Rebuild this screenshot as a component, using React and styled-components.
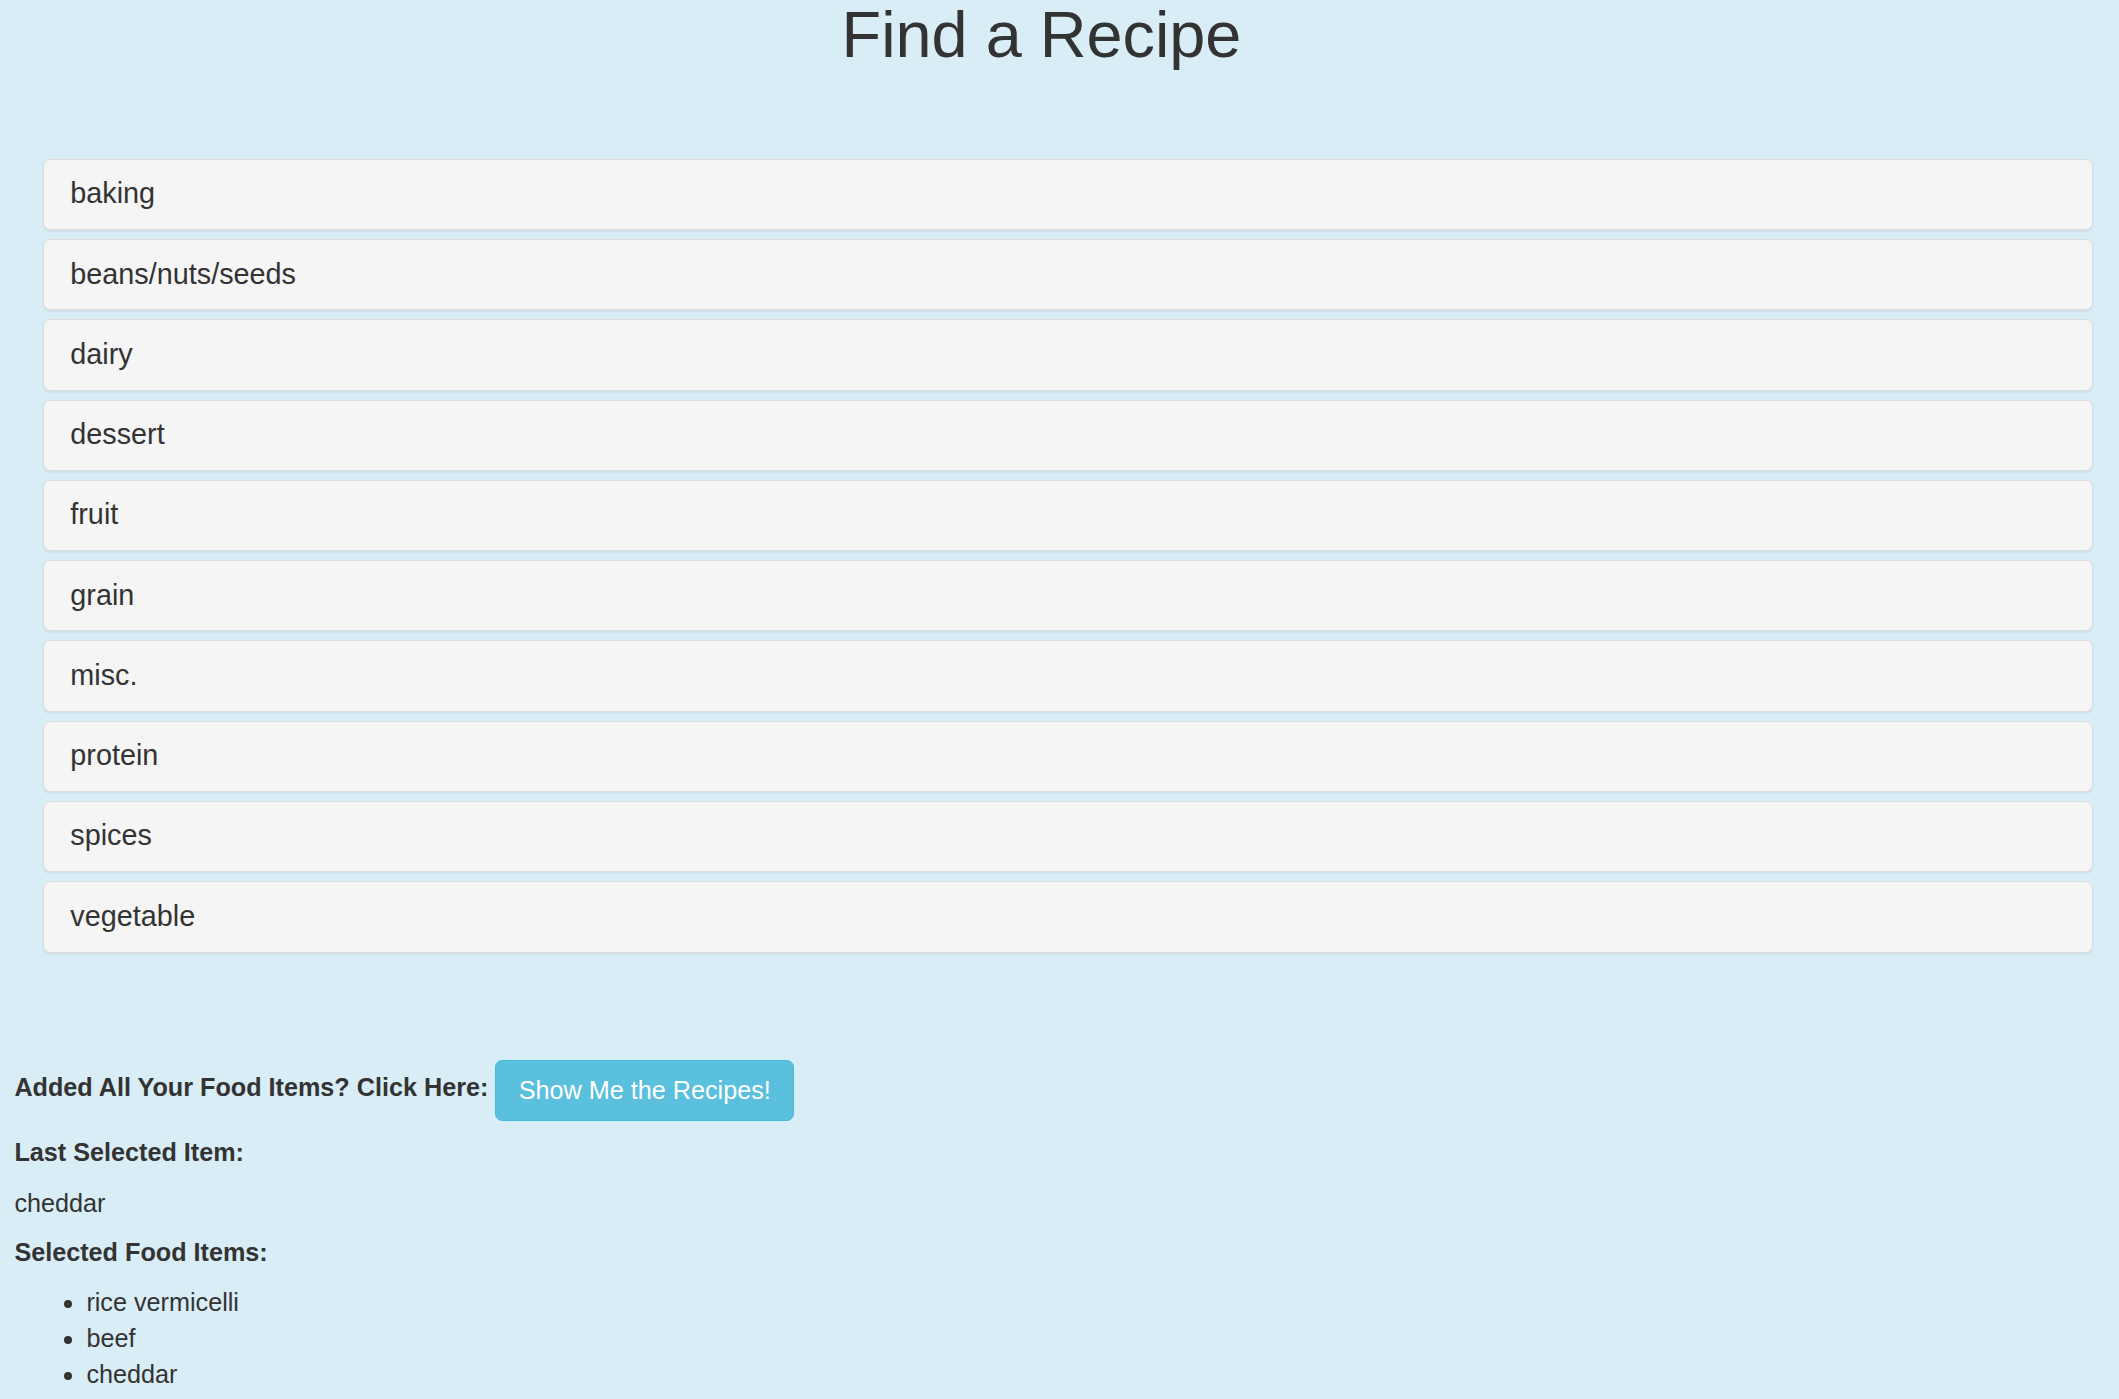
import React from "react";
import styled, { createGlobalStyle } from "styled-components";

const GlobalStyle = createGlobalStyle`
  html, body {
    margin: 0;
    padding: 0;
    background: #d9edf7;
  }
  body {
    font-family: "Liberation Sans", Arial, Helvetica, sans-serif;
    color: #333333;
    font-size: 25.2px;
    line-height: 36px;
  }
  * { box-sizing: border-box; }
`;

const Page = styled.div`
  min-height: 1399px;
  background: #d9edf7;
  padding-bottom: 40px;
`;

const Title = styled.h1`
  margin: -1.4px 0 0;
  padding-right: 36px;
  text-align: center;
  font-size: 64.8px;
  line-height: 1.1;
  font-weight: 400;
  color: #333333;
`;

const PanelGroup = styled.div`
  display: flex;
  flex-direction: column;
  gap: 9px;
  margin: 89px 26.3px 0 42.7px;
`;

const Panel = styled.div`
  background: #f5f5f5;
  border: 1px solid #dddddd;
  border-radius: 7.2px;
  box-shadow: 0 1.8px 1.8px rgba(0, 0, 0, 0.05);
  padding: 18.4px 27px 19.2px 26.6px;
`;

const PanelTitle = styled.h4`
  margin: 0;
  font-size: 28.8px;
  line-height: 31.68px;
  font-weight: 400;
  color: #333333;
`;

const Bottom = styled.div`
  margin-top: 107px;
  padding: 0 14.4px;
  display: flex;
  flex-direction: column;
`;

const ActionRow = styled.div`
  display: flex;
  align-items: flex-start;
  gap: 7px;
`;

const Label = styled.span`
  display: block;
  font-weight: 700;
  font-size: 25.2px;
  line-height: 36px;
  margin-top: ${(p) => p.$top || 0}px;
`;

const Text = styled.p`
  margin: ${(p) => p.$top || 0}px 0 0;
  font-size: 25.2px;
  line-height: 36px;
`;

const Button = styled.button`
  font-family: "Liberation Sans", Arial, Helvetica, sans-serif;
  font-size: 25.2px;
  line-height: 36px;
  color: #ffffff;
  background: #5bc0de;
  border: 1px solid #46b8da;
  border-radius: 7.2px;
  padding: 11.6px 22.4px;
  cursor: pointer;
`;

const List = styled.ul`
  margin: 14px 0 0;
  padding-left: 72px;
  list-style: disc;
`;

const Item = styled.li`
  font-size: 25.2px;
  line-height: 36px;
`;

const categories = [
  "baking",
  "beans/nuts/seeds",
  "dairy",
  "dessert",
  "fruit",
  "grain",
  "misc.",
  "protein",
  "spices",
  "vegetable",
];

const selected = ["rice vermicelli", "beef", "cheddar"];

export default function App() {
  return (
    <Page>
      <GlobalStyle />
      <Title>Find a Recipe</Title>
      <PanelGroup>
        {categories.map((c) => (
          <Panel key={c}>
            <PanelTitle>{c}</PanelTitle>
          </Panel>
        ))}
      </PanelGroup>
      <Bottom>
        <ActionRow>
          <Label $top={9.7}>Added All Your Food Items? Click Here:</Label>
          <Button>Show Me the Recipes!</Button>
        </ActionRow>
        <Label $top={13.7}>Last Selected Item:</Label>
        <Text $top={15}>cheddar</Text>
        <Label $top={13}>Selected Food Items:</Label>
        <List>
          {selected.map((s) => (
            <Item key={s}>{s}</Item>
          ))}
        </List>
      </Bottom>
    </Page>
  );
}
